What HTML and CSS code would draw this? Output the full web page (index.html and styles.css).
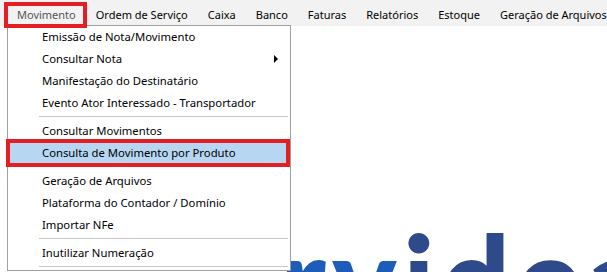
FILE: index.html
```html
<!DOCTYPE html>
<html lang="pt-BR">
<head>
    <meta charset="UTF-8">
    <title>Movimento</title>
    <link rel="stylesheet" href="styles.css">
</head>
<body>
    <nav class="menubar">
        <span class="menu-item active">Movimento</span>
        <span class="menu-item">Ordem de Serviço</span>
        <span class="menu-item">Caixa</span>
        <span class="menu-item">Banco</span>
        <span class="menu-item">Faturas</span>
        <span class="menu-item">Relatórios</span>
        <span class="menu-item">Estoque</span>
        <span class="menu-item">Geração de Arquivos</span>
    </nav>

    <main class="workspace">
        <div class="logo"><span class="logo-light">rv</span>idea</div>
    </main>

    <div class="dropdown">
        <div class="drop-item">Emissão de Nota/Movimento</div>
        <div class="drop-item has-sub">Consultar Nota <span class="arrow"></span></div>
        <div class="drop-item">Manifestação do Destinatário</div>
        <div class="drop-item">Evento Ator Interessado - Transportador</div>
        <div class="separator"></div>
        <div class="drop-item">Consultar Movimentos</div>
        <div class="drop-item selected">Consulta de Movimento por Produto</div>
        <div class="separator"></div>
        <div class="drop-item">Geração de Arquivos</div>
        <div class="drop-item">Plataforma do Contador / Domínio</div>
        <div class="drop-item">Importar NFe</div>
        <div class="separator"></div>
        <div class="drop-item">Inutilizar Numeração</div>
        <div class="separator"></div>
    </div>

    <div class="mark mark-menu"></div>
    <div class="mark mark-item"></div>
</body>
</html>
```

FILE: styles.css
```css
body {
    margin: 0;
    width: 607px;
    height: 272px;
    overflow: hidden;
    position: relative;
    background: #fff;
    font-family: "Noto Sans", "Open Sans", sans-serif;
    font-size: 11.3px;
    color: #000;
}
.menubar {
    display: flex;
    height: 26px;
    padding-left: 7px;
    background: #f2f2f2;
    font-size: 11px;
    white-space: nowrap;
    overflow: hidden;
}
.menu-item {
    padding: 5px 10px 0;
    line-height: 20px;
}
.menu-item.active {
    color: #555;
}
.workspace {
    position: relative;
    height: 246px;
    overflow: hidden;
}
.logo {
    position: absolute;
    left: 280px;
    top: 190px;
    font-family: Lato, sans-serif;
    font-weight: 900;
    font-size: 122px;
    line-height: 122px;
    letter-spacing: 6px;
    color: #2e4a8a;
    white-space: nowrap;
}
.logo-light {
    color: #1d5cb8;
}
.dropdown {
    position: absolute;
    left: 7px;
    top: 25px;
    width: 282px;
    background: #fff;
    border: 1px solid #a0a0a0;
}
.drop-item {
    position: relative;
    height: 22px;
    line-height: 22px;
    padding-left: 34px;
    white-space: nowrap;
}
.drop-item.selected {
    background: #b7d6f1;
    border-bottom: 1px solid #4a8ad0;
    height: 21px;
    margin-right: 3px;
}
.arrow {
    position: absolute;
    right: 12px;
    top: 7px;
    border-left: 4px solid #000;
    border-top: 4px solid transparent;
    border-bottom: 4px solid transparent;
}
.separator {
    height: 6px;
    margin: 0 2px 0 31px;
    position: relative;
}
.separator::after {
    content: "";
    position: absolute;
    left: 0;
    right: 0;
    top: 2px;
    border-top: 1px solid #c8c8c8;
}
.mark {
    position: absolute;
    border: 4px solid #e31e24;
}
.mark-menu {
    left: 4px;
    top: 2px;
    width: 75px;
    height: 18px;
}
.mark-item {
    left: 6px;
    top: 139px;
    width: 276px;
    height: 20px;
}
```
